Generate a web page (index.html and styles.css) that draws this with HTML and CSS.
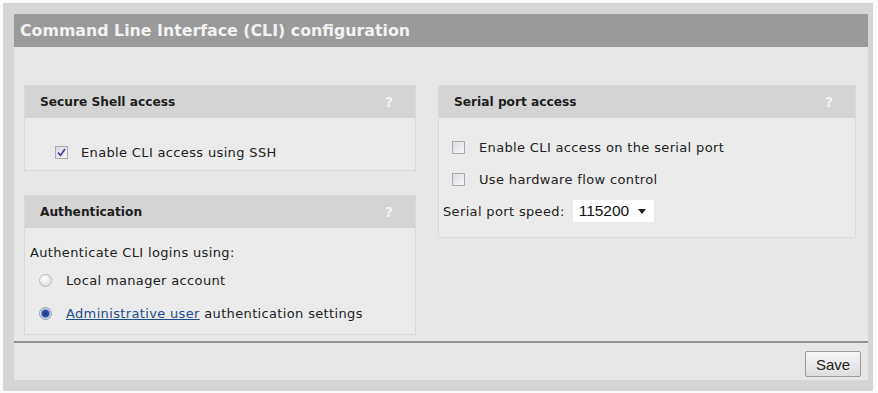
FILE: index.html
```html
<!DOCTYPE html>
<html lang="en">
<head>
  <meta charset="UTF-8">
  <meta name="viewport" content="width=device-width, initial-scale=1.0">
  <title>Command Line Interface (CLI) configuration</title>
  <link rel="stylesheet" href="styles.css">
</head>
<body>
  <div class="frame">
    <h1 class="title">Command Line Interface (CLI) configuration</h1>
    <div class="content">
      <div class="column left">
        <div class="panel ssh">
          <div class="panel-head"><span>Secure Shell access</span><span class="help">?</span></div>
          <div class="panel-body">
            <div class="row">
              <span class="checkbox checked">
                <svg width="9" height="9" viewBox="0 0 9 9"><path d="M1 4.5 L3.5 7.5 L8 1" fill="none" stroke="#3b3f9a" stroke-width="1.6"/></svg>
              </span>
              <span class="label">Enable CLI access using SSH</span>
            </div>
          </div>
        </div>
        <div class="panel auth">
          <div class="panel-head"><span>Authentication</span><span class="help">?</span></div>
          <div class="panel-body">
            <div class="intro">Authenticate CLI logins using:</div>
            <div class="row radio-row">
              <span class="radio"></span>
              <span class="label">Local manager account</span>
            </div>
            <div class="row radio-row">
              <span class="radio selected"></span>
              <span class="label"><a href="#" class="link">Administrative user</a> authentication settings</span>
            </div>
          </div>
        </div>
      </div>
      <div class="column right">
        <div class="panel serial">
          <div class="panel-head"><span>Serial port access</span><span class="help">?</span></div>
          <div class="panel-body">
            <div class="row">
              <span class="checkbox"></span>
              <span class="label">Enable CLI access on the serial port</span>
            </div>
            <div class="row">
              <span class="checkbox"></span>
              <span class="label">Use hardware flow control</span>
            </div>
            <div class="speed-row">
              <span class="speed-label">Serial port speed:</span>
              <span class="select">115200 <span class="arrow"></span></span>
            </div>
          </div>
        </div>
      </div>
    </div>
    <div class="footer">
      <button class="save">Save</button>
    </div>
  </div>
</body>
</html>
```

FILE: styles.css
```css
 body {
   margin: 0;
   background-color: #fbfbfb;
   font-family: 'DejaVu Sans', Verdana, sans-serif;
   font-size: 13px;
   letter-spacing: 0.35px;
   color: #222;
 }

 .frame {
   margin: 3px 5px 0 3px;
   padding: 11px 5px 11px 11px;
   background-color: #d5d5d5;
 }

 .title {
   margin: 0;
   height: 33px;
   line-height: 33px;
   padding-left: 6px;
   background-color: #9a9a9a;
   color: #f2f2f2;
   font-size: 15.8px;
   font-weight: bold;
   letter-spacing: 0;
 }

 .content {
   display: flex;
   gap: 22px;
   padding: 38px 12px 0 10px;
   height: 256px;
   background-color: #e7e7e7;
 }

 .column {
   display: flex;
   flex-direction: column;
   gap: 24px;
 }

 .left {
   width: 392px;
 }

 .right {
   width: 418px;
 }

 .panel {
   border: 1px solid #d9d9d9;
   background-color: #ebebeb;
 }

 .panel-head {
   display: flex;
   justify-content: space-between;
   align-items: center;
   height: 32px;
   padding: 0 22px 0 15px;
   background-color: #d4d4d4;
   font-size: 12.2px;
   font-weight: bold;
   letter-spacing: 0;
   color: #1e1e1e;
 }

 .help {
   color: #f6f6f6;
   font-size: 14px;
 }

 .ssh .panel-body {
   height: 52px;
   padding: 16px 0 0 30px;
   box-sizing: border-box;
   display: flex;
   align-items: center;
 }

 .row {
   display: flex;
   align-items: center;
   gap: 13px;
 }

 .checkbox {
   width: 13px;
   height: 13px;
   box-sizing: border-box;
   border: 1px solid #a9a9b5;
   background: linear-gradient(135deg, #dcdce2, #f7f7f7);
   display: inline-flex;
   align-items: center;
   justify-content: center;
 }

 .auth .panel-body {
   height: 106px;
   padding: 17px 0 0 5px;
   box-sizing: border-box;
 }

 .intro {
   margin-bottom: 12px;
 }

 .radio-row {
   padding-left: 9px;
   gap: 14px;
   height: 33px;
   margin-top: -8px;
   margin-bottom: 8px;
 }

 .radio {
   width: 13px;
   height: 13px;
   box-sizing: border-box;
   border-radius: 50%;
   border: 1px solid #b9b9c2;
   background: radial-gradient(circle at 40% 35%, #ffffff, #d4d4da);
 }

 .radio.selected {
   border-color: #8d9bb8;
   background: radial-gradient(circle, #173477 0, #2f58a8 3.5px, #b9c6e0 4.5px, #eef0f5 6px);
 }

 .link {
   color: #1f4d8c;
   text-decoration: underline;
 }

 .serial .panel-body {
   height: 119px;
   padding: 22px 0 0 13px;
   box-sizing: border-box;
 }

 .serial .row {
   gap: 14px;
   margin-bottom: 17px;
 }

 .speed-row {
   display: flex;
   align-items: center;
   gap: 8px;
   margin-left: -9px;
   margin-top: -4px;
 }

 .select {
   display: inline-flex;
   align-items: center;
   gap: 9px;
   height: 22px;
   padding: 0 8px 0 6px;
   background-color: #fff;
   font-family: 'Liberation Sans', Arial, sans-serif;
   font-size: 15.5px;
   letter-spacing: 0;
   color: #111;
 }

 .arrow {
   width: 0;
   height: 0;
   border-left: 4px solid transparent;
   border-right: 4px solid transparent;
   border-top: 5px solid #222;
 }

 .footer {
   display: flex;
   justify-content: flex-end;
   height: 39px;
   padding: 8px 7px 0 0;
   box-sizing: border-box;
   border-top: 2px solid #8f8f8f;
   background-color: #e7e7e7;
 }

 .save {
   width: 56px;
   height: 26px;
   border: 1px solid #9a9a9a;
   border-radius: 2px;
   background: linear-gradient(#f6f6f6, #dedede);
   font-family: 'Liberation Sans', Arial, sans-serif;
   font-size: 15px;
   letter-spacing: 0;
   color: #222;
   padding: 0;
 }
```
